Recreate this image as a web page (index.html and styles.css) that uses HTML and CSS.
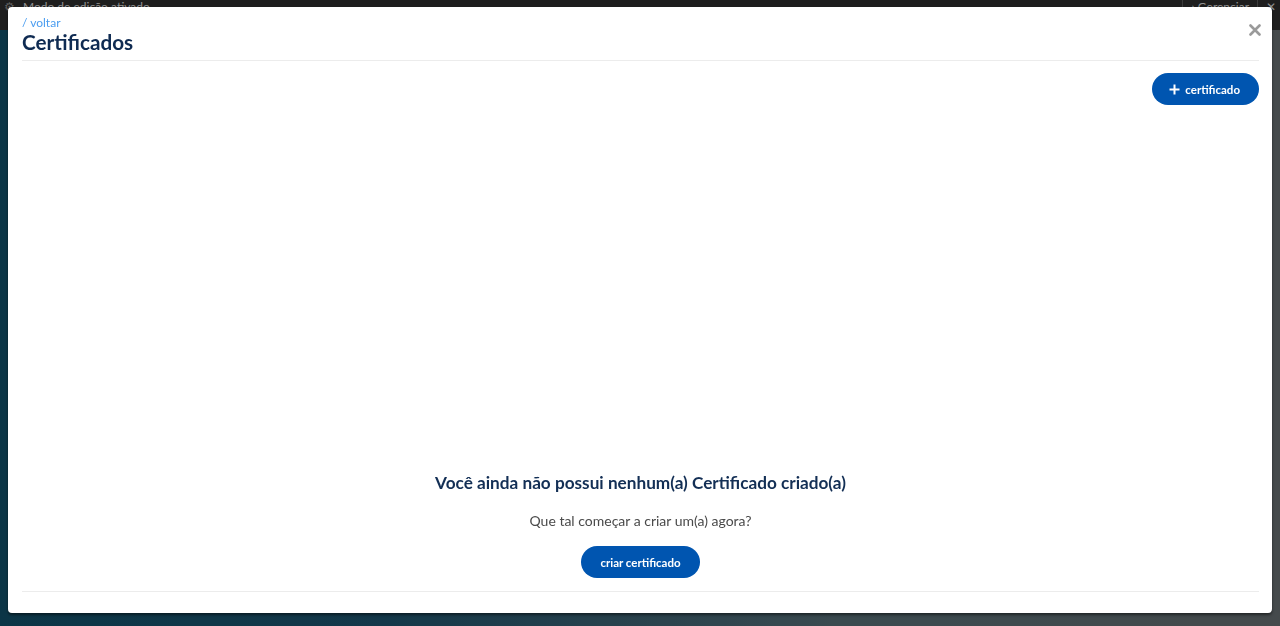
FILE: index.html
```html
<!DOCTYPE html>
<html lang="pt-BR">
<head>
  <meta charset="UTF-8" />
  <meta name="viewport" content="width=device-width, initial-scale=1.0"/>
  <title>Certificados</title>
  <link rel="stylesheet" href="styles.css">
</head>
<body>
  <!-- Barra de edição (atrás do modal) -->
  <div class="topbar">
    <div class="topbar-left">
      <span class="gear">⚙</span>
      <span>Modo de edição ativado</span>
    </div>
    <div class="topbar-right">
      <span class="manage">› Gerenciar</span>
      <span class="topbar-x">✕</span>
    </div>
  </div>
  <div class="backdrop"></div>

  <!-- Modal -->
  <div class="modal">
    <div class="modal-header">
      <div>
        <a href="#" class="back-link">/ voltar</a>
        <h1>Certificados</h1>
      </div>
      <button class="close-btn" aria-label="Fechar">
        <svg width="12" height="12" viewBox="0 0 12 12">
          <path d="M1.5 1.5 L10.5 10.5 M10.5 1.5 L1.5 10.5" stroke="#9a9a9a" stroke-width="2.6" stroke-linecap="round"/>
        </svg>
      </button>
    </div>

    <div class="toolbar">
      <button class="btn-primary btn-add">
        <svg width="11" height="11" viewBox="0 0 11 11">
          <path d="M5.5 0.5 V10.5 M0.5 5.5 H10.5" stroke="#fff" stroke-width="2"/>
        </svg>
        certificado
      </button>
    </div>

    <div class="empty-state">
      <h2>Você ainda não possui nenhum(a) Certificado criado(a)</h2>
      <p>Que tal começar a criar um(a) agora?</p>
      <button class="btn-primary btn-create">criar certificado</button>
    </div>
  </div>
</body>
</html>
```

FILE: styles.css
```css
* {
  box-sizing: border-box;
}
html, body {
  height: 100%;
}
body {
  margin: 0;
  font-family: Lato, "Noto Sans", Arial, sans-serif;
  background: linear-gradient(90deg, #114d65 0%, #1d516a 30%, #536a72 65%, #636a6d 100%);
  overflow: hidden;
}

/* Barra superior */
.topbar {
  height: 30px;
  background-color: #2b2b2b;
  color: #cfcfcf;
  font-size: 12px;
  display: flex;
  justify-content: space-between;
  align-items: flex-start;
  padding: 0 4px;
  line-height: 14px;
}
.topbar-left, .topbar-right {
  display: flex;
  gap: 8px;
}
.gear {
  color: #888;
}
.manage {
  border-left: 1px solid #555;
  border-right: 1px solid #555;
  padding: 0 8px;
}
.backdrop {
  position: fixed;
  inset: 0;
  background: rgba(0, 0, 0, 0.3);
}

/* Modal */
.modal {
  position: fixed;
  top: 7px;
  left: 8px;
  right: 8px;
  bottom: 13px;
  background-color: #fff;
  border-radius: 4px;
  box-shadow: 0 2px 3px rgba(0, 0, 0, 0.5);
  padding: 0 13px 21px 14px;
  display: flex;
  flex-direction: column;
}
.modal-header {
  display: flex;
  justify-content: space-between;
  align-items: flex-start;
  border-bottom: 1px solid #ececec;
  padding-top: 10px;
  padding-bottom: 5px;
}
.back-link {
  display: block;
  color: #4b9df0;
  font-size: 12px;
  text-decoration: none;
  line-height: 12px;
}
h1 {
  margin: 0;
  color: #0f2b52;
  font-size: 20.7px;
  font-weight: 700;
  line-height: 26px;
}
.close-btn {
  background: none;
  border: none;
  padding: 0;
  margin-top: 7px;
  margin-right: -2px;
  cursor: pointer;
}

.toolbar {
  display: flex;
  justify-content: flex-end;
  padding-top: 12px;
}
.btn-primary {
  background-color: #0055b0;
  color: #fff;
  border: none;
  border-radius: 16px;
  height: 32px;
  padding: 0 20px;
  font-family: inherit;
  font-size: 11.5px;
  font-weight: 700;
  white-space: nowrap;
  display: inline-flex;
  align-items: center;
  justify-content: center;
  gap: 5px;
  cursor: pointer;
}
.btn-add {
  padding: 0 19px 0 17px;
}

.empty-state {
  flex: 1;
  display: flex;
  flex-direction: column;
  justify-content: flex-end;
  align-items: center;
  border-bottom: 1px solid #ececec;
  padding-bottom: 13px;
}
.empty-state h2 {
  margin: 0 0 5px;
  color: #132f55;
  font-size: 17.2px;
  font-weight: 700;
  line-height: 24px;
}
.empty-state p {
  margin: 12px 0 16px;
  color: #4a4a4a;
  font-size: 14px;
  line-height: 18px;
}
.btn-create {
  width: 119px;
}
```
